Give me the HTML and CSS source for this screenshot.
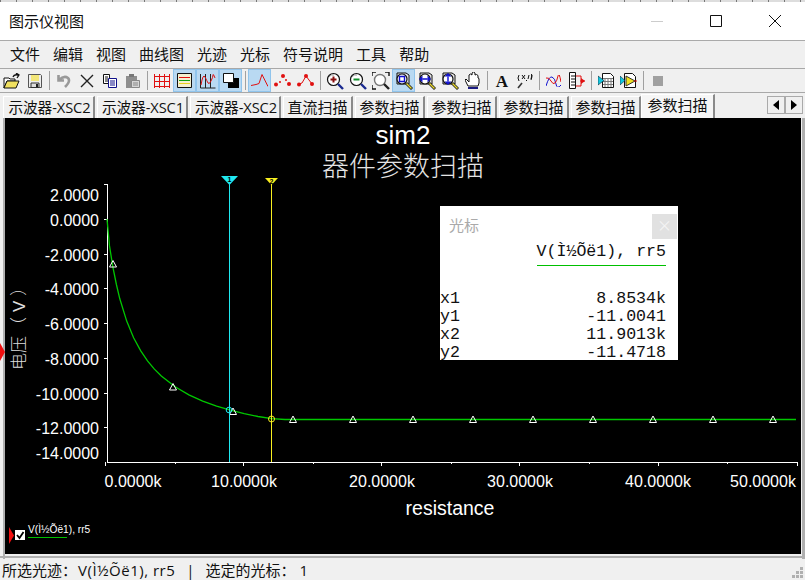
FILE: index.html
```html
<!DOCTYPE html>
<html lang="zh-CN">
  <head>
    <meta charset="UTF-8" />
    <title>图示仪视图</title>
    <link rel="stylesheet" href="styles.css">
  </head>
  <body>
    <div class="ruler"></div>
    <header class="titlebar">
      <span class="title">图示仪视图</span>
      <div class="winbtns">
        <svg width="12" height="12" viewBox="0 0 12 12"><path d="M0 6.5h12" stroke="#ccc" /></svg>
        <svg width="12" height="12" viewBox="0 0 12 12"><path d="M.5.5h11v11H.5z" fill="none" stroke="#111" /></svg>
        <svg width="12" height="12" viewBox="0 0 12 12"><path d="M0 0l12 12M12 0L0 12" stroke="#111" /></svg>
      </div>
    </header>
    <nav class="menubar">
      <span>文件</span><span>编辑</span><span>视图</span><span>曲线图</span><span>光迹</span><span>光标</span><span>符号说明</span><span>工具</span><span>帮助</span>
    </nav>

    <div class="toolbar">
      <svg width="0" height="0" class="defs">
        <symbol id="mag" viewBox="0 0 18 18">
          <circle cx="7.5" cy="7.5" r="6" fill="#fff" stroke="#111" stroke-width="1.2" />
          <path d="M3 5q2-3 5-2" fill="none" stroke="#999" />
          <path d="M12 12l5 5" stroke="#1a2a90" stroke-width="2.4" />
        </symbol>
        <symbol id="magbox" viewBox="0 0 18 18">
          <path d="M2 1h9l3 2v9H2z" fill="#e8e8e8" stroke="#111" />
          <circle cx="7" cy="7" r="5" fill="#fff" stroke="#111" stroke-width="1.2" />
          <path d="M11 11l6 6" stroke="#111" stroke-width="2.8" />
          <path d="M11.5 11.5l5 5" stroke="#e8d830" stroke-width="1.4" />
        </symbol>
      </svg>

      <div class="tool"><svg width="17" height="16" viewBox="0 0 17 16">
        <path d="M1 5h5l1 1h5v2H4L1 15z" fill="#fff" stroke="#111" />
        <path d="M1 15l3-7h12l-3 7z" fill="#f0e060" stroke="#111" />
        <path d="M10 4q1-3 5-2M13 0l3 2-2 3" fill="none" stroke="#111" stroke-width="1.3" />
      </svg></div>
      <div class="tool"><svg width="16" height="16" viewBox="0 0 16 16">
        <path d="M1.500 1.500h12l1 1v12h-13z" fill="#eee" stroke="#555" />
        <path d="M4 2h8v6H4z" fill="#f3e77a" />
        <path d="M4 10h8v4.500H4z" fill="#ddd" stroke="#333" />
        <path d="M9 11h2v3H9z" fill="#222" />
      </svg></div>
      <i class="sep"></i>
      <div class="tool"><svg width="16" height="16" viewBox="0 0 16 16">
        <path d="M2.500 2v5.500H8M3 7q5-5 9-2 3 3-3 9" fill="none" stroke="#999" stroke-width="2.600" />
      </svg></div>
      <div class="tool"><svg width="14" height="14" viewBox="0 0 14 14">
        <path d="M1 1l12 12M13 1L1 13" stroke="#222" stroke-width="1.400" />
      </svg></div>
      <div class="tool"><svg width="16" height="16" viewBox="0 0 16 16">
        <path d="M1.500 1.500h6v9h-6z" fill="#fff" stroke="#111" />
        <path d="M3 4h3M3 6h3M3 8h3" stroke="#111" />
        <path d="M6.500 5.500h8v9h-8z" fill="#fff" stroke="#10108a" />
        <path d="M8 8h5M8 10h5M8 12h5" stroke="#10108a" />
      </svg></div>
      <div class="tool"><svg width="16" height="16" viewBox="0 0 16 16">
        <path d="M1 3h11v12H1z" fill="#8e8e8e" />
        <path d="M4 1h5v3H4z" fill="#777" />
        <path d="M6.500 7.500h8v7h-8z" fill="#d6d6d6" stroke="#888" />
        <path d="M8 10h5M8 12h5" stroke="#888" />
      </svg></div>
      <i class="sep"></i>
      <div class="tool"><svg width="16" height="16" viewBox="0 0 16 16">
        <path d="M.5 1v14M5.500 1v14M10.500 1v14M15.500 1v14M0 3.500h16M0 8.500h16M0 13.500h16" stroke="#e01010" shape-rendering="crispEdges" />
      </svg></div>
      <div class="tool on"><svg width="15" height="15" viewBox="0 0 15 15">
        <path d="M.5.500h14v14H.5z" fill="#f4f0d0" stroke="#111" />
        <path d="M2 4.500h11" stroke="#e01010" /><path d="M2 7.500h11" stroke="#10a010" /><path d="M2 10.500h11" stroke="#e8d020" />
      </svg></div>
      <div class="tool on"><svg width="16" height="16" viewBox="0 0 16 16">
        <path d="M.5 1v14h15M5.500 1v14M10.500 1v14" fill="none" stroke="#222" />
        <path d="M1 12q2-12 4-8t3 6 3-2 2-6 2 3" fill="none" stroke="#e01010" />
      </svg></div>
      <div class="tool on"><svg width="16" height="15" viewBox="0 0 16 15">
        <path d="M5 5h11v10H5z" fill="#000" />
        <path d="M.5.500h10v9H.5z" fill="#fff" stroke="#111" />
      </svg></div>
      <i class="sep"></i>
      <div class="tool on"><svg width="17" height="13" viewBox="0 0 17 13">
        <path d="M0 11.500l5-1 3-1 3-9 6 12" fill="none" stroke="#e01010" />
      </svg></div>
      <div class="tool"><svg width="17" height="13" viewBox="0 0 17 13" fill="#e01010">
        <circle cx="2" cy="10.500" r="2" /><circle cx="9" cy="2" r="2" /><circle cx="15" cy="10" r="2" />
        <circle cx="6" cy="8" r="1" /><circle cx="12" cy="6" r="1" />
      </svg></div>
      <div class="tool"><svg width="17" height="13" viewBox="0 0 17 13" fill="#e01010">
        <circle cx="2" cy="10.500" r="2" /><circle cx="9" cy="2" r="2" /><circle cx="15" cy="10" r="2" />
        <path d="M2 10l3-1 4-7 6 8" fill="none" stroke="#e01010" />
      </svg></div>
      <i class="sep"></i>
      <div class="tool"><svg width="18" height="18" viewBox="0 0 18 18">
        <use href="#mag" /><path d="M4.500 7.500h6M7.500 4.500v6" stroke="#8a1010" stroke-width="2" />
      </svg></div>
      <div class="tool"><svg width="18" height="18" viewBox="0 0 18 18">
        <use href="#mag" /><path d="M4.500 7.500h6" stroke="#10902a" stroke-width="2" />
      </svg></div>
      <div class="tool"><svg width="18" height="18" viewBox="0 0 18 18">
        <circle cx="8" cy="8" r="5.500" fill="#fff" stroke="#777" stroke-width="1.400" />
        <path d="M12 12l5 5" stroke="#222" stroke-width="2.400" />
        <path d="M0 4V0h4M13 0h4v4M0 13v4h4" fill="none" stroke="#111" stroke-width="1.400" />
      </svg></div>
      <div class="tool on"><svg width="18" height="18" viewBox="0 0 18 18">
        <use href="#magbox" /><path d="M4.500 4.500h5v5h-5z" fill="none" stroke="#1010d0" stroke-width="1.400" />
      </svg></div>
      <div class="tool"><svg width="18" height="18" viewBox="0 0 18 18">
        <use href="#magbox" /><path d="M2 7h10M4.500 4.500L2 7l2.500 2.500M9.500 4.500L12 7 9.500 9.500" fill="none" stroke="#1010d0" stroke-width="1.400" />
      </svg></div>
      <div class="tool"><svg width="18" height="18" viewBox="0 0 18 18">
        <use href="#magbox" /><path d="M7 2v10M4.500 4.500L7 2l2.500 2.500M4.500 9.500L7 12l2.500-2.500" fill="none" stroke="#1010d0" stroke-width="1.400" />
      </svg></div>
      <div class="tool"><svg width="15" height="17" viewBox="0 0 15 17">
        <path d="M3 14L0 8l1-1 3 3V3l1.500-1L7 3V1l1.500-1L10 1v2l1.500-.5L13 3.500V6l1 .5V11l-1 3z" fill="#fff" stroke="#111" />
        <path d="M3 15h10v2H3z" fill="#1a1a80" />
      </svg></div>
      <i class="sep"></i>
      <div class="tool"><svg width="18" height="18" viewBox="0 0 18 18">
        <text x="9" y="15" class="ico-a">A</text>
      </svg></div>
      <div class="tool"><svg width="16" height="16" viewBox="0 0 16 16">
        <path d="M2 2Q0 5 2 8M5 2l3 4M8 2L5 6M9 8l1-1M12 2l-1 4M15 2l-1 4M14.500 1q1 3-.5 6" fill="none" stroke="#111" />
        <path d="M5 10l-4 5" stroke="#333" stroke-width="1.600" />
      </svg></div>
      <i class="sep"></i>
      <div class="tool"><svg width="15" height="12" viewBox="0 0 15 12">
        <path d="M0 11Q3 1 6 2t4 7 5 1" fill="none" stroke="#1010d0" />
        <path d="M0 3q3-1 5 3t4 2 3-7 3 6" fill="none" stroke="#e01010" />
      </svg></div>
      <div class="tool"><svg width="16" height="17" viewBox="0 0 16 17">
        <path d="M.5.500h6v16h-6z" fill="#fff" stroke="#111" />
        <path d="M2 4h4M2 7h4M2 10h4M2 13h4" stroke="#111" />
        <path d="M7 4h5v10H7M11 9h5" fill="none" stroke="#e01010" />
        <path d="M12 6l4 3-4 3z" fill="#e01010" />
      </svg></div>
      <i class="sep"></i>
      <div class="tool"><svg width="16" height="15" viewBox="0 0 16 15">
        <path d="M4.500.500h8l3 3v11h-11z" fill="#fff" stroke="#111" />
        <path d="M7 5v9M10 5v9M13 5v9M5 5.500h10M5 8.500h10M5 11.500h10" stroke="#777" />
        <path d="M0 3l6 4.500L0 12z" fill="#10c8e0" stroke="#123" stroke-width=".6" />
      </svg></div>
      <div class="tool"><svg width="17" height="15" viewBox="0 0 17 15">
        <path d="M4.500.500h8l3 3v11h-11z" fill="#fff" stroke="#111" />
        <path d="M0 3l5 4.500L0 12z" fill="#10c8e0" stroke="#123" stroke-width=".6" />
        <path d="M6 3l9 5-9 5z" fill="#f0e020" stroke="#333" />
        <path d="M14 8h3" stroke="#e01010" />
      </svg></div>
      <i class="sep"></i>
      <div class="tool"><i class="stop"></i></div>
    </div>

    <div class="tabbar">
      <div class="tab t-1 first">示波器-XSC2</div>
      <div class="tab t-1">示波器-XSC1</div>
      <div class="tab t-1">示波器-XSC2</div>
      <div class="tab t-2">直流扫描</div>
      <div class="tab t-2">参数扫描</div>
      <div class="tab t-2">参数扫描</div>
      <div class="tab t-2">参数扫描</div>
      <div class="tab t-2">参数扫描</div>
      <div class="tab t-2 active">参数扫描</div>
      <div class="scroller">
        <span><svg width="6" height="10" viewBox="0 0 6 10"><path d="M6 0v10L0 5z" /></svg></span>
        <span><svg width="6" height="10" viewBox="0 0 6 10"><path d="M0 0v10l6-5z" /></svg></span>
      </div>
    </div>

    <main class="frame">
      <div class="plot">
        <svg class="chart" width="796" height="436" viewBox="5 119 796 436">
          <text x="403" y="145" class="t-main">sim2</text>
          <text x="403" y="177" class="t-sub">器件参数扫描</text>

          <!-- axes -->
          <path d="M104 185.500h3.500V463.500H797v3M104 220.500h3M104 255.500h3M104 289.500h3M104 324.500h3M104 359.500h3M104 394.500h3M104 428.500h3M105.500 463v4M243.500 464v3M381.500 464v3M519.500 464v3M658.500 464v3M175.500 464v1M313.500 464v1M451.500 464v1M589.500 464v1M727.500 464v1" fill="none" stroke="#fff" shape-rendering="crispEdges" />

          <g class="ylab">
            <text x="99" y="202">2.0000</text>
            <text x="99" y="227">0.0000</text>
            <text x="99" y="262">-2.0000</text>
            <text x="99" y="296">-4.0000</text>
            <text x="99" y="331">-6.0000</text>
            <text x="99" y="366">-8.0000</text>
            <text x="99" y="401">-10.0000</text>
            <text x="99" y="435">-12.0000</text>
            <text x="99" y="460">-14.0000</text>
          </g>
          <g class="xlab">
            <text x="133" y="488">0.0000k</text>
            <text x="244" y="488">10.0000k</text>
            <text x="382" y="488">20.0000k</text>
            <text x="520" y="488">30.0000k</text>
            <text x="658" y="488">40.0000k</text>
            <text x="763" y="488">50.0000k</text>
          </g>
          <text x="450" y="516" class="x-title">resistance</text>
          <text transform="translate(25 371) rotate(-90)" class="y-title">电压<tspan dx="2" class="paren">（V）</tspan></text>

          <!-- trace -->
          <polyline class="trace" points="107,220 109.500,246.900 112.900,268.200 116.400,285.500 119.800,299.800 126.700,322.100 133.600,338.700 140.600,351.600 147.500,361.800 154.400,370.100 161.300,377 175.100,387.800 188.900,395.800 202.700,402.100 216.600,407.100 230.400,411.100 244.200,414.600 258,417.500 271.800,419.700 285,420.500 796,420.500" />
          <g class="marks">
            <path d="M113 261.500l3.500 6.500h-7z" /><path d="M173 384.500l3.500 6.500h-7z" /><path d="M233 409l3.500 6.500h-7z" />
            <path d="M293 417l3.500 6.500h-7z" /><path d="M353 417l3.500 6.500h-7z" /><path d="M413 417l3.500 6.500h-7z" />
            <path d="M473 417l3.500 6.500h-7z" /><path d="M533 417l3.500 6.500h-7z" /><path d="M593 417l3.500 6.500h-7z" />
            <path d="M653 417l3.500 6.500h-7z" /><path d="M713 417l3.500 6.500h-7z" /><path d="M773 417l3.500 6.500h-7z" />
          </g>

          <!-- cursors -->
          <path d="M229.500 183v280" stroke="#20e8f0" />
          <path d="M221 177h17l-8.500 9z" fill="#20e8f0" />
          <text x="229.500" y="183" class="cur-n">1</text>
          <circle cx="229" cy="411" r="2.800" fill="none" stroke="#20e8f0" />
          <path d="M271.500 183v280" stroke="#f8f020" />
          <path d="M265 179h13l-6.500 7z" fill="#f8f020" />
          <text x="271.500" y="185" class="cur-n">2</text>
          <circle cx="271.500" cy="420" r="3" fill="none" stroke="#f8f020" />

          <!-- legend -->
          <path d="M9 528l5 8.500-5 8.500z" fill="#f01010" />
          <path d="M15 531h10v10H15z" fill="#fff" />
          <path d="M17 536l2.500 3 4-6" fill="none" stroke="#000" stroke-width="1.800" />
          <text x="28" y="534" class="leg">V(Ì½Õë1), rr5</text>
          <path d="M28 538.500h39" stroke="#00c000" />
        </svg>

        <div class="cursor-box">
          <div class="cb-head">
            <span>光标</span>
            <i class="cb-close">×</i>
          </div>
          <div class="cb-trace"><span>V(Ì½Õë1), rr5</span></div>
          <dl class="cb-rows">
            <dt>x1</dt><dd>8.8534k</dd>
            <dt>y1</dt><dd>-11.0041</dd>
            <dt>x2</dt><dd>11.9013k</dd>
            <dt>y2</dt><dd>-11.4718</dd>
          </dl>
        </div>
        <i class="side-arrow"></i>
      </div>
    </main>

    <footer class="statusbar">
      <span>所选光迹：<span class="wide">V(Ì½Õë1), rr5</span></span>
      <span class="bar">|</span>
      <span>选定的光标： 1</span>
      <svg class="grip" width="11" height="11" viewBox="0 0 11 11" fill="#b0b0b0">
        <path d="M8 0h3v3H8zM4 4h3v3H4zM8 4h3v3H8zM0 8h3v3H0zM4 8h3v3H4zM8 8h3v3H8z" />
      </svg>
    </footer>
  </body>
</html>
```

FILE: styles.css
```css
html,
body {
  margin: 0;
  height: 100%;
}
body {
  position: relative;
  width: 805px;
  height: 580px;
  overflow: hidden;
  display: flex;
  flex-direction: column;
  background: #f0f0f0;
  color: #111;
  font-family: "Open Sans", "Noto Sans CJK SC", sans-serif;
  font-size: 15px;
}

.ruler {
  height: 2px;
  background: repeating-linear-gradient(90deg, #777 0 1px, #ddd 1px 16px);
}
.titlebar {
  height: 38px;
  display: flex;
  align-items: center;
  justify-content: space-between;
  background: #fff;
  border-bottom: 1px solid #aaa;
  padding-left: 9px;
}
.winbtns {
  display: flex;
  gap: 47px;
  padding-right: 24px;
}

.menubar {
  height: 26px;
  display: flex;
  align-items: center;
  gap: 13px;
  padding: 0 0 2px 10px;
  border-bottom: 1px solid #a8a8a8;
}

.toolbar {
  height: 23px;
  display: flex;
  border-bottom: 1px solid #a8a8a8;
}
.defs {
  position: absolute;
}
.tool {
  width: 23px;
  height: 23px;
  box-sizing: border-box;
  display: flex;
  align-items: center;
  justify-content: center;
}
.tool.on {
  background: #b9d9f2;
  border: 1px solid #90c4ec;
}
.sep {
  width: 6px;
  height: 23px;
  background: linear-gradient(#a0a0a0, #a0a0a0) 3px 2px / 1px 19px no-repeat;
}
.stop {
  width: 10px;
  height: 10px;
  background: #a0a0a0;
}
.ico-a {
  font: bold 17px "Liberation Serif", serif;
  text-anchor: middle;
  fill: #111;
}

.tabbar {
  height: 25px;
  display: flex;
  align-items: flex-end;
  gap: 2px;
  padding-left: 3px;
  position: relative;
}
.tab {
  height: 22px;
  box-sizing: border-box;
  display: flex;
  align-items: center;
  justify-content: center;
  white-space: nowrap;
  padding-bottom: 2px;
  border-top: 1px solid #fff;
  border-left: 1px solid #fff;
  border-right: 2px solid #8a8a8a;
}
.t-1 {
  width: 91px;
  padding-left: 2px;
  font-size: 14.67px;
  letter-spacing: -.1px;
}
.tab.first {
  width: 92px;
}
.t-2 {
  width: 70px;
}
.tab.active {
  width: 74px;
  height: 24px;
  background: #f6f6f6;
  padding-bottom: 5px;
  margin-left: -2px;
}
.scroller {
  position: absolute;
  right: 2px;
  top: 3px;
  display: flex;
}
.scroller span {
  width: 18px;
  height: 18px;
  box-sizing: border-box;
  display: flex;
  align-items: center;
  justify-content: center;
  border: 1px solid #aaa;
  background: #f0f0f0;
}

.frame {
  height: 441px;
  box-sizing: border-box;
  padding: 0 4px 5px 5px;
  background:
    linear-gradient(#b0b0b0, #b0b0b0) 3px 0 / 2px 100% no-repeat,
    linear-gradient(#b0b0b0, #b0b0b0) 0 438px / 100% 2px no-repeat,
    linear-gradient(#b0b0b0, #b0b0b0) right 0 top 0 / 3px 100% no-repeat;
}
.plot {
  position: relative;
  height: 436px;
  background: #000;
}
.chart {
  display: block;
}
.chart text {
  fill: #fff;
  font-family: "Liberation Sans", "Noto Sans CJK SC", sans-serif;
}
.t-main {
  font-size: 26px;
  text-anchor: middle;
}
.chart .t-sub {
  font-size: 27px;
  font-weight: 300;
  text-anchor: middle;
  fill: #e4e4e4;
}
.ylab text {
  font-size: 16px;
  text-anchor: end;
}
.xlab text {
  font-size: 16px;
  text-anchor: middle;
}
.x-title {
  font-size: 19.5px;
  text-anchor: middle;
}
.y-title {
  font-size: 17px;
  font-weight: 300;
}
.chart .y-title {
  fill: #ddd;
}
.paren {
  letter-spacing: 5px;
}
.trace {
  fill: none;
  stroke: #00c800;
  stroke-width: 1.3;
}
.marks path {
  fill: none;
  stroke: #fff;
}
.chart .cur-n {
  font-size: 7px;
  font-weight: bold;
  text-anchor: middle;
  fill: #000;
}
.chart .leg {
  font-size: 10.2px;
}

.cursor-box {
  position: absolute;
  left: 435px;
  top: 88px;
  width: 238px;
  height: 154px;
  background: #fff;
  color: #111;
  font: 16.6px/18px "Liberation Mono", monospace;
}
.cb-head {
  height: 38px;
  display: flex;
  justify-content: space-between;
  align-items: flex-start;
  padding: 8px 1px 0 9px;
  box-sizing: border-box;
  color: #aaa;
  font: 15px/22px "Noto Sans CJK SC", sans-serif;
}
.cb-close {
  width: 25px;
  height: 25px;
  background: #e1e1e1;
  color: #f4f4f4;
  font-style: normal;
  text-align: center;
}
.cb-trace {
  display: flex;
  justify-content: flex-end;
  padding-right: 12px;
  height: 22px;
  line-height: 16px;
}
.cb-trace span {
  box-sizing: border-box;
  height: 22px;
  border-bottom: 1px solid #00c000;
}
.cb-rows {
  margin: 24px 12px 0 0;
  display: grid;
  grid-template-columns: auto 1fr;
}
.cb-rows dd {
  margin: 0;
  text-align: right;
}

.side-arrow {
  position: absolute;
  left: -5px;
  top: 225px;
  border-left: 5px solid #f01010;
  border-top: 9px solid transparent;
  border-bottom: 9px solid transparent;
}

.statusbar {
  flex: 1;
  display: flex;
  align-items: center;
  gap: 11px;
  padding-left: 2px;
  position: relative;
}
.wide {
  letter-spacing: .5px;
  margin-left: 1px;
}
.grip {
  position: absolute;
  right: 2px;
  bottom: 2px;
}
```
